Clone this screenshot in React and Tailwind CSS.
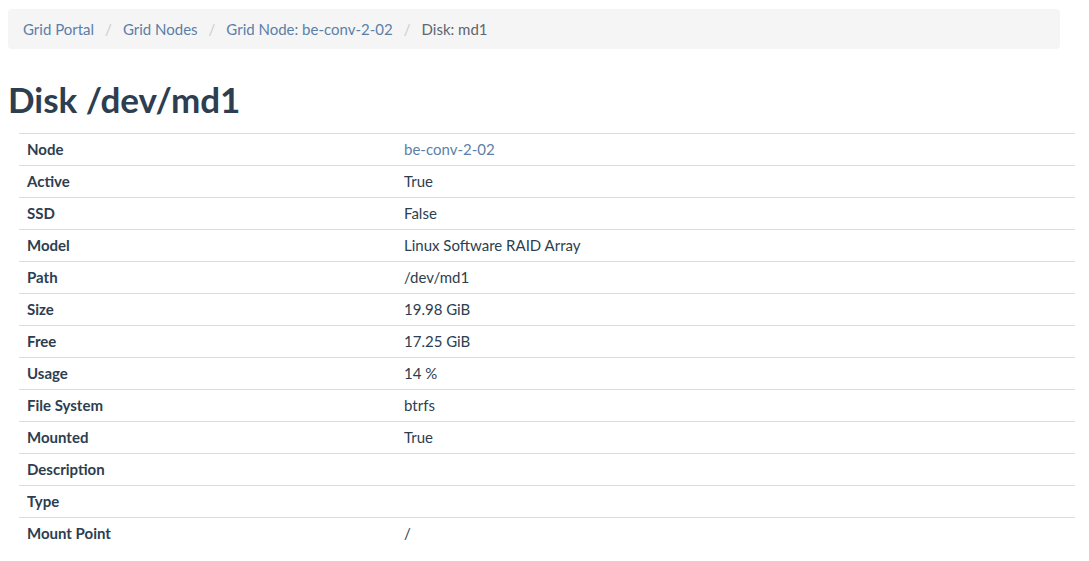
import React from "react";

const rows = [
  ["Node", "be-conv-2-02", true],
  ["Active", "True"],
  ["SSD", "False"],
  ["Model", "Linux Software RAID Array"],
  ["Path", "/dev/md1"],
  ["Size", "19.98 GiB"],
  ["Free", "17.25 GiB"],
  ["Usage", "14 %"],
  ["File System", "btrfs"],
  ["Mounted", "True"],
  ["Description", ""],
  ["Type", ""],
  ["Mount Point", "/"],
];

const crumbs = ["Grid Portal", "Grid Nodes", "Grid Node: be-conv-2-02"];

export default function App() {
  return (
    <div
      className="min-h-screen bg-white text-[#2c3e50]"
      style={{ fontFamily: "Lato, 'Open Sans', sans-serif" }}
    >
      <div className="pl-2 pr-[29px] pt-[9px]">
        <ol className="flex items-center h-10 px-[15px] bg-[#f5f5f5] rounded text-[15px]">
          {crumbs.map((c, i) => (
            <li key={c} className="flex items-center">
              {i > 0 && <span className="px-[11px] text-[#cccccc]">/</span>}
              <a className="text-[#5b7fa8]">{c}</a>
            </li>
          ))}
          <li className="flex items-center">
            <span className="px-[11px] text-[#cccccc]">/</span>
            <span className="text-[#5e6670]">Disk: md1</span>
          </li>
        </ol>
      </div>
      <h1 className="pl-2 mt-[28px] mb-[12px] text-[35px] leading-[44px] font-bold text-[#2c3e50]">
        Disk /dev/md1
      </h1>
      <div className="pl-[19px] pr-[14px]">
        <table className="w-full border-collapse text-[15px]">
          <tbody>
            {rows.map(([k, v, link]) => (
              <tr key={k} className="border-t border-[#dddddd]">
                <th className="w-[377px] text-left font-bold px-2 py-[5px] leading-[21px]">
                  {k}
                </th>
                <td className="px-2 py-[5px] leading-[21px]">
                  {link ? <a className="text-[#5b7fa8]">{v}</a> : v}
                </td>
              </tr>
            ))}
          </tbody>
        </table>
      </div>
    </div>
  );
}
